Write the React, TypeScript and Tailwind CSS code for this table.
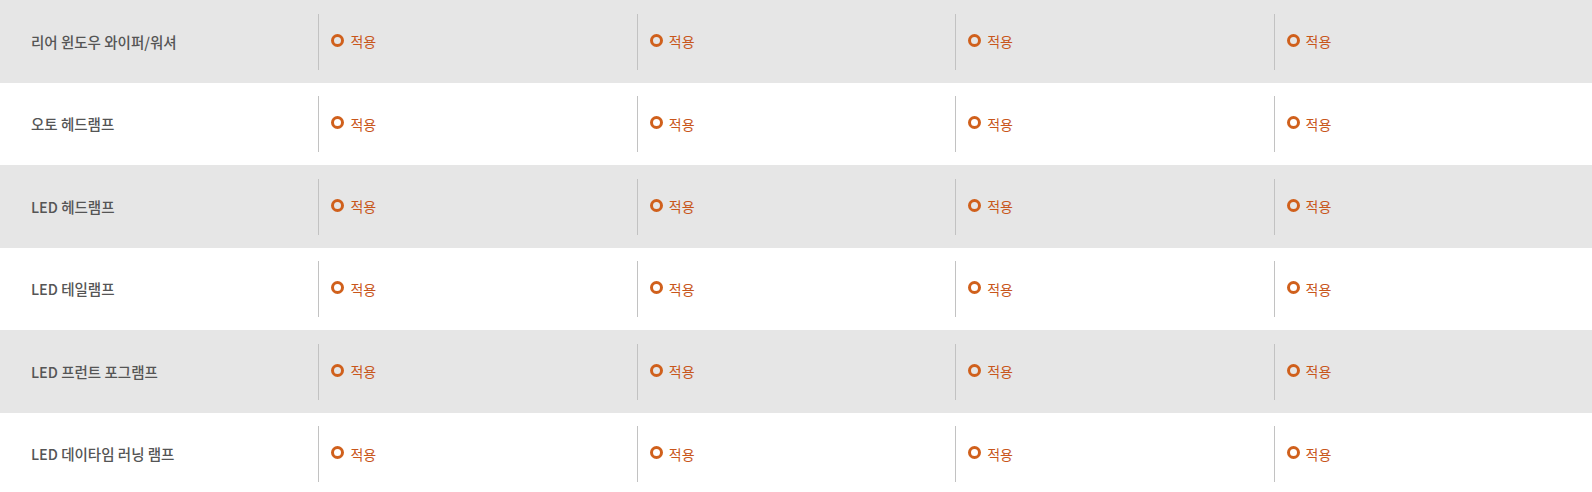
import React from "react";

const rows = [
  "리어 윈도우 와이퍼/워셔",
  "오토 헤드램프",
  "LED 헤드램프",
  "LED 테일램프",
  "LED 프런트 포그램프",
  "LED 데이타임 러닝 램프",
];

function Cell() {
  return (
    <div className="flex h-[56px] items-center border-l border-[#c2c2c2] pl-[12px]">
      <span className="mb-[3px] mr-[6px] box-border inline-block h-[13px] w-[13px] rounded-full border-[3px] border-[#d0601c]" />
      <span className="text-[14px] text-[#c8561b]">적용</span>
    </div>
  );
}

export default function App() {
  return (
    <div
      className="w-[1592px]"
      style={{ fontFamily: '"Noto Sans CJK KR", "Noto Sans", sans-serif' }}
    >
      {rows.map((label, i) => (
        <div
          key={label}
          className={`grid grid-cols-5 items-center ${i % 2 === 0 ? "h-[83px] bg-[#e6e6e6]" : "h-[82px] bg-white"}`}
        >
          <div className="pl-[31px] text-[14.5px] font-medium text-[#555555]">{label}</div>
          <Cell />
          <Cell />
          <Cell />
          <Cell />
        </div>
      ))}
    </div>
  );
}
